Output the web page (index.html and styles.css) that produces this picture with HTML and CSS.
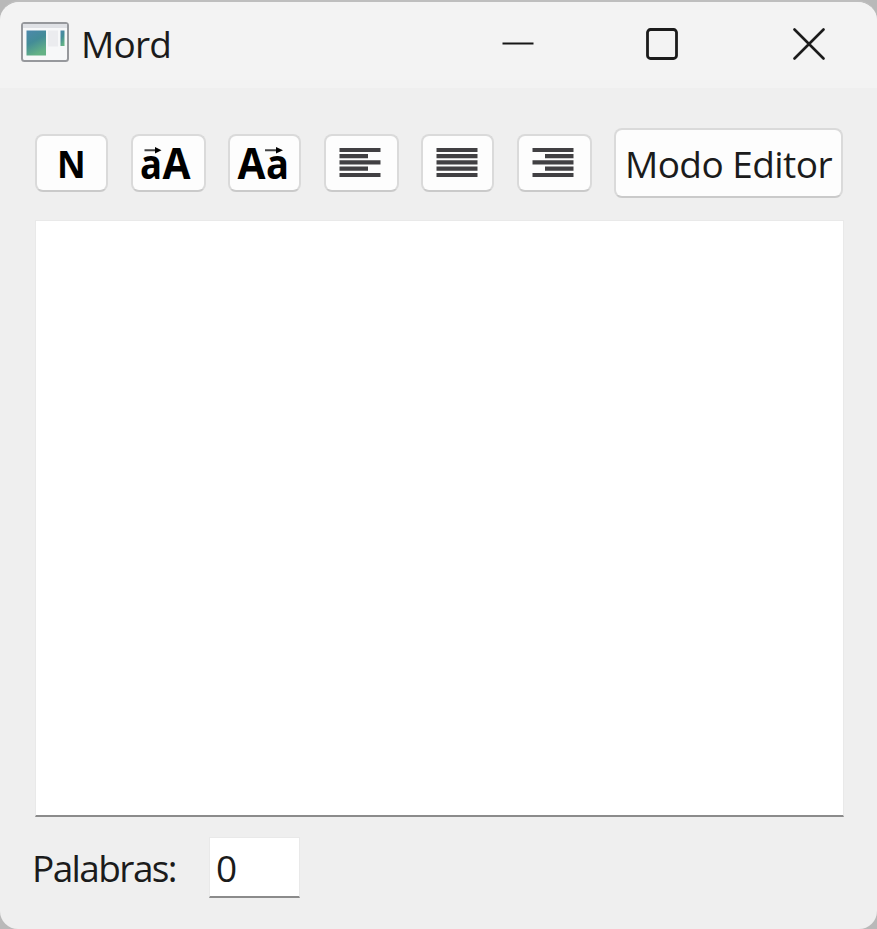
FILE: index.html
```html
<!DOCTYPE html>
<html lang="es">
<head>
<meta charset="utf-8">
<title>Mord</title>
<link rel="stylesheet" href="styles.css">
</head>
<body>
<div class="window">
  <header class="titlebar">
    <svg class="app-icon" width="48" height="40" viewBox="0 0 48 40">
      <defs><linearGradient id="g" x1="0" y1="0" x2=".4" y2="1"><stop offset="0" stop-color="#4c88ac"/><stop offset=".5" stop-color="#438c97"/><stop offset="1" stop-color="#64b286"/></linearGradient></defs>
      <rect x="1" y="1" width="46" height="38" rx="2.5" fill="#f7f8f9" stroke="#96989c" stroke-width="2"/>
      <path d="M2 4H46" stroke="#dfe1e5" stroke-width="4"/>
      <rect x="5.500" y="8.500" width="19.500" height="25" fill="url(#g)"/>
      <rect x="27" y="8.500" width="10" height="16" fill="#ebecef"/>
      <rect x="39.500" y="8.500" width="4" height="15.500" fill="url(#g)"/>
    </svg>
    <h1 class="title">Mord</h1>
    <div class="controls">
      <svg width="32" height="32" viewBox="0 0 32 32"><path d="M0.500 15.500H31.500" stroke="#161616" stroke-width="2.200"/></svg>
      <svg width="32" height="32" viewBox="0 0 32 32"><rect x="1.500" y="1.500" width="29" height="29" rx="3" fill="none" stroke="#1b1b1b" stroke-width="2.800"/></svg>
      <svg class="close" width="32" height="32" viewBox="0 0 32 32"><path d="M1.500 1.500L30.500 30.500M30.500 1.500L1.500 30.500" stroke="#1b1b1b" stroke-width="2.600" stroke-linecap="round"/></svg>
    </div>
  </header>
  <main class="content">
    <div class="toolbar">
      <button class="tool narrow bold-tool"><span>N</span></button>
      <button class="tool case-tool">
        <svg width="54" height="44" viewBox="0 0 54 44">
          <text class="glyph" x="0" y="36.500" font-size="41" textLength="22" lengthAdjust="spacingAndGlyphs">a</text>
          <text class="glyph" x="22.500" y="36.500" font-size="42.500" textLength="28" lengthAdjust="spacingAndGlyphs">A</text>
          <path d="M4.500 8.200H17" stroke="#444" stroke-width="2"/><path d="M15 5L21.500 8.200L15 11.400Z"/>
        </svg>
      </button>
      <button class="tool narrow case-tool">
        <svg width="54" height="44" viewBox="0 0 54 44">
          <text class="glyph" x="1.500" y="36.500" font-size="42.500" textLength="28" lengthAdjust="spacingAndGlyphs">A</text>
          <text class="glyph" x="30" y="36.500" font-size="41" textLength="23" lengthAdjust="spacingAndGlyphs">a</text>
          <path d="M29 8.200H42" stroke="#444" stroke-width="2"/><path d="M40 5L47 8.200L40 11.400Z"/>
        </svg>
      </button>
      <button class="tool"><svg class="lines" width="42" height="32" viewBox="0 0 42 32"><path d="M.5 3H41.500M.5 9.200H29M.5 15.400H41.500M.5 21.700H29M.5 28H41.500"/></svg></button>
      <button class="tool narrow"><svg class="lines" width="42" height="32" viewBox="0 0 42 32"><path d="M.5 3H41.500M.5 9.200H41.500M.5 15.400H41.500M.5 21.700H41.500M.5 28H41.500"/></svg></button>
      <button class="tool"><svg class="lines" width="42" height="32" viewBox="0 0 42 32"><path d="M.5 3H41.500M13 9.200H41.500M.5 15.400H41.500M13 21.700H41.500M.5 28H41.500"/></svg></button>
      <button class="tool mode"><span>Modo Editor</span></button>
    </div>
    <div class="editor"></div>
    <footer class="status">
      <span class="label">Palabras:</span>
      <span class="count">0</span>
    </footer>
  </main>
</div>
</body>
</html>
```
FILE: styles.css
```css
* { box-sizing: border-box; }
body { margin: 0; background: #b9b9b9; font-family: "Open Sans", "Noto Sans", sans-serif; color: #1b1b1b; }
.window {
  height: 929px;
  display: flex;
  flex-direction: column;
  overflow: hidden;
  background: #efefef;
  border-top: 2px solid #bebebe;
  border-radius: 20px 20px 18px 18px;
}
.titlebar {
  height: 86px;
  flex: none;
  display: flex;
  align-items: flex-start;
  padding: 20px 52px 0 21px;
  background: #f3f3f3;
}
.title { margin: -3px 0 0 12px; font-size: 37px; line-height: 50px; font-weight: 400; letter-spacing: -.8px; }
.controls { display: flex; gap: 112px; margin: 6px 0 0 auto; }
.controls svg { display: block; }
.controls .close { margin-left: 3px; }
.content { flex: 1; display: flex; flex-direction: column; padding: 40px 33px 0 35px; }
.toolbar { height: 70px; display: flex; justify-content: space-between; align-items: center; padding-right: 1px; }
.tool {
  width: 75px;
  height: 58px;
  padding: 0;
  display: flex;
  align-items: center;
  justify-content: center;
  border: 2px solid #dadada;
  border-bottom-color: #cacaca;
  border-radius: 8px;
  background: #fdfdfd;
  color: #1b1b1b;
  font-family: inherit;
}
.narrow { width: 73px; }
.bold-tool { font-size: 37.500px; font-weight: 700; color: #000; line-height: 50px; }
.bold-tool span { transform: scaleX(.94); padding-top: 2px; }
.case-tool svg { flex: none; overflow: visible; margin: 1px 0 0 -3px; }
.glyph { font-family: "Open Sans", sans-serif; font-weight: 700; fill: #000; }
.lines { fill: none; stroke: #414043; stroke-width: 4.200; flex: none; position: relative; left: -1px; }
.mode { width: 229px; height: 70px; font-size: 37px; line-height: 50px; letter-spacing: -.55px; white-space: nowrap; }
.mode span { padding-top: 2px; }
.editor { height: 597px; margin-top: 22px; background: #fff; border: 1px solid #e9e9e9; border-bottom: 2px solid #8b8b8b; }
.status { display: flex; align-items: flex-start; margin-top: 20px; font-size: 37px; line-height: 50px; }
.label { width: 174px; padding-top: 6px; margin-left: -3px; letter-spacing: -1.600px; }
.count { width: 91px; height: 61px; margin-left: 3px; padding: 5px 0 0 6px; background: #fff; border: 1px solid #e9e9e9; border-bottom: 2px solid #8b8b8b; }
```
